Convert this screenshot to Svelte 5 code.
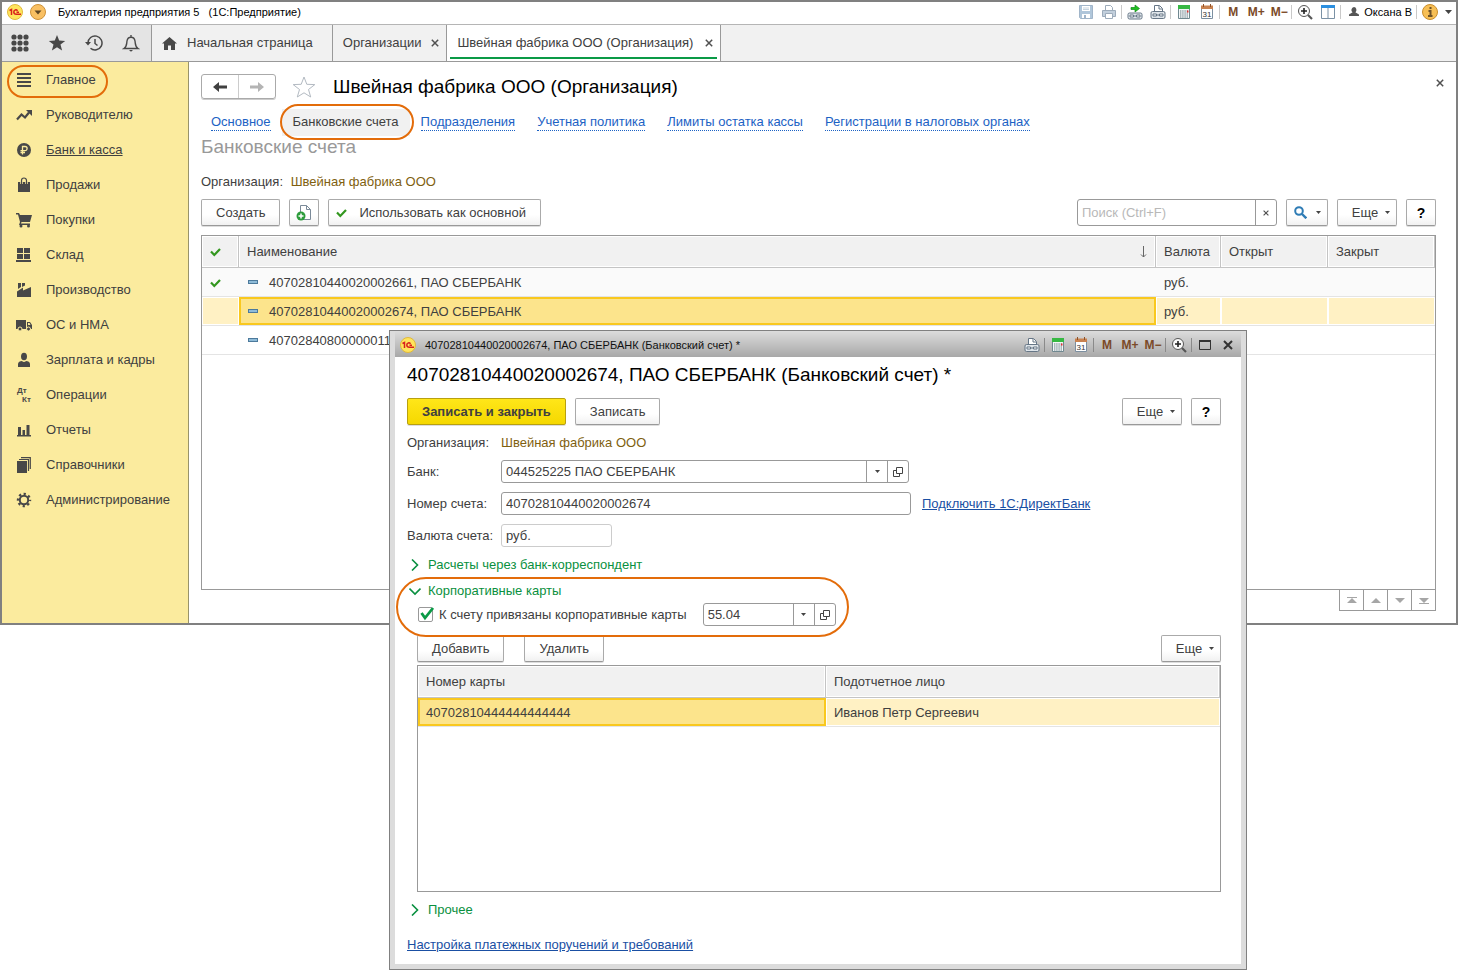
<script lang="ts">
  const menu = [
    { icon: 'main', label: 'Главное', marked: true },
    { icon: 'trend', label: 'Руководителю' },
    { icon: 'ruble', label: 'Банк и касса', current: true },
    { icon: 'bag', label: 'Продажи' },
    { icon: 'cart', label: 'Покупки' },
    { icon: 'stock', label: 'Склад' },
    { icon: 'factory', label: 'Производство' },
    { icon: 'truck', label: 'ОС и НМА' },
    { icon: 'person', label: 'Зарплата и кадры' },
    { icon: 'dtkt', label: 'Операции' },
    { icon: 'chart', label: 'Отчеты' },
    { icon: 'books', label: 'Справочники' },
    { icon: 'gear', label: 'Администрирование' }
  ];

  const links = [
    'Основное',
    'Банковские счета',
    'Подразделения',
    'Учетная политика',
    'Лимиты остатка кассы',
    'Регистрации в налоговых органах'
  ];

  const accounts = [
    { name: '40702810440020002661, ПАО СБЕРБАНК', currency: 'руб.', main: true },
    { name: '40702810440020002674, ПАО СБЕРБАНК', currency: 'руб.', selected: true },
    { name: '40702840800000011', currency: '' }
  ];

  let bank = $state('044525225 ПАО СБЕРБАНК');
  let accountNumber = $state('40702810440020002674');
  let ledger = $state('55.04');
  let hasCards = $state(true);
  let search = $state('');
</script>

{#snippet logo()}
  <svg width="16" height="16" viewBox="0 0 16 16" aria-hidden="true">
    <circle cx="8" cy="8" r="7.5" fill="#ffe45c" stroke="#e0b93c" />
    <path d="M2.500 6.500l2-1v5.500M10.500 6.800C9.500 5.200 6.800 5.600 6.800 8c0 1.800 1.300 2.300 2.700 2.300h4.500M9.500 8.300H12" fill="none" stroke="#d8201c" stroke-width="1.500" />
  </svg>
{/snippet}

{#snippet tool(name: string)}
  <svg width="16" height="16" viewBox="0 0 16 16" aria-hidden="true">
    {#if name === 'save'}
      <path d="M1.500 1.500h13v13h-12l-1-1z" fill="#9db8d2" stroke="#8aa3bc" />
      <path d="M4 2h8v5H4zM4 10h8v4H4z" fill="#fff" />
      <path d="M5 4h6M5 5.500h6" stroke="#b9c9d8" />
      <path d="M6 11h2v3H6z" fill="#8aa3bc" />
    {:else if name === 'print'}
      <path d="M4.500 6V1.500h5l2 2V6" fill="#fff" stroke="#8497aa" />
      <path d="M1.500 6.500h13v6h-13z" fill="#b4c4d4" stroke="#8497aa" />
      <path d="M4.500 9.500h7v5h-7z" fill="#fff" stroke="#8497aa" />
    {:else if name === 'link'}
      <path d="M4 3.500h4V1l4.500 3.500L8 8V5.500H4z" fill="#20c020" stroke="#108a18" stroke-width=".7" />
      <rect x="1" y="9" width="14" height="6" rx="1.500" fill="#dfe5ea" stroke="#667686" />
      <path d="M3 11h3.500v2H3zM9.500 11H13v2H9.500zM6 12h4" fill="#fff" stroke="#667686" />
    {:else if name === 'printlink'}
      <path d="M4.500 8V1.500h5l3 3V8" fill="#fff" stroke="#667686" />
      <path d="M9 2v3h3" fill="none" stroke="#667686" />
      <rect x="1" y="7.500" width="14" height="7" rx="1.500" fill="#dfe5ea" stroke="#667686" />
      <path d="M3 10h3.500v2H3zM9.500 10H13v2H9.500zM6 11h4" fill="#fff" stroke="#667686" />
    {:else if name === 'calc'}
      <path d="M2.500 1.500h11v13h-11z" fill="#f4f7f8" stroke="#708890" />
      <path d="M2 1h12v4H2z" fill="#37b843" />
      <path d="M4 7h8M4 9h8M4 11h8M4 13h8" stroke="#607880" stroke-dasharray="1.400 .8" />
      <path d="M11 6.500h1.500v2H11z" fill="#e03030" />
    {:else if name === 'calendar'}
      <path d="M2.500 3.500h11v11h-11z" fill="#fff" stroke="#7c8fa0" />
      <path d="M2 1.500h12V5H2z" fill="#c98250" />
      <path d="M4.500 0v3M11.500 0v3" stroke="#8f5228" />
      <text x="8" y="13" font-size="8" text-anchor="middle" fill="#333">31</text>
    {:else if name === 'zoom'}
      <circle cx="7" cy="7" r="5.500" fill="#fafafa" stroke="#555" />
      <path d="M4 7h6M7 4v6" stroke="#222" stroke-width="1.600" />
      <path d="M11 11l4 4" stroke="#555" stroke-width="2.200" />
    {:else if name === 'panels'}
      <path d="M1.500 1.500h13v13h-13z" fill="#fff" stroke="#7a91a5" />
      <path d="M1 1h14v3H1z" fill="#2b8fe0" />
      <path d="M8 4v11" stroke="#7a91a5" />
    {:else if name === 'user'}
      <path d="M8 3a2.600 3 0 0 1 1.500 5.300c0 1 3.500 1 3.500 3V12H3v-.7c0-2 3.500-2 3.500-3A3 3 0 0 1 8 3z" fill="#555" />
    {:else if name === 'info'}
      <circle cx="8" cy="8" r="7.500" fill="#f7bf55" stroke="#c98d2c" />
      <path d="M8.500 3v2M6.500 7h2v5M6 12h4.500" fill="none" stroke="#6f5228" stroke-width="2" />
    {:else if name === 'max'}
      <path d="M2.500 3.500h11v9h-11z" fill="none" stroke="#333" />
      <path d="M2 4h12" stroke="#333" stroke-width="2" />
    {:else if name === 'close'}
      <path d="M4 4l8 8M12 4l-8 8" stroke="#333" stroke-width="2" />
    {/if}
  </svg>
{/snippet}

{#snippet glyph(name: string)}
  <svg width="16" height="16" viewBox="0 0 16 16" fill="#484848" aria-hidden="true">
    {#if name === 'main'}
      <path d="M1 1h14v2H1zM1 5h14v2H1zM1 9h14v2H1zM1 13h14v2H1z" />
    {:else if name === 'trend'}
      <path d="M1 12.500l4.500-5 3.500 3L13 5.500" fill="none" stroke="#484848" stroke-width="2.200" />
      <path d="M10 3h6v6z" />
    {:else if name === 'ruble'}
      <circle cx="8" cy="8" r="7" />
      <path d="M6.500 12.500v-8H9a2 2 0 0 1 0 4.200H4.500M4.500 10.500H9" fill="none" stroke="#fbeb9e" stroke-width="1.300" />
    {:else if name === 'bag'}
      <path d="M2 5h12v10H2z" />
      <path d="M5.500 7V3.500a2.500 2.500 0 0 1 5 0V7" fill="none" stroke="#fbeb9e" stroke-width="2.600" />
      <path d="M5.500 7V3.500a2.500 2.500 0 0 1 5 0V7" fill="none" stroke="#484848" stroke-width="1.200" />
    {:else if name === 'cart'}
      <path d="M0 1h3l1 2h12l-2 7H5.500l-.5 1.500h9V13H3l1-3L2 2.500H0z" />
      <circle cx="5" cy="14" r="1.500" />
      <circle cx="12.500" cy="14" r="1.500" />
    {:else if name === 'stock'}
      <path d="M1 1h6v5H1zM8 1h6v5H8zM1 7h6v5H1zM8 7h6v5H8zM0 13h15v2H0z" />
    {:else if name === 'factory'}
      <path d="M1 15V9.500l6-4v3L15 5v10zM2 1h3v4L2 7zM6 1h3v2.500L6 5z" />
    {:else if name === 'truck'}
      <path d="M0 3h10v9H0zM11 5h3l2 3v4h-5z" />
      <path d="M12 6h1.500l1 2H12z" fill="#fbeb9e" />
      <circle cx="4" cy="12" r="2" stroke="#fbeb9e" />
      <circle cx="12.500" cy="12" r="2" stroke="#fbeb9e" />
    {:else if name === 'person'}
      <ellipse cx="8" cy="4.500" rx="3" ry="3.800" />
      <path d="M2 15v-3c0-2 2-3 4-3 1 1.300 3 1.300 4 0 2 0 4 1 4 3v3z" />
    {:else if name === 'dtkt'}
      <text x="1" y="6" font-size="8" font-weight="bold">Дт</text>
      <text x="6" y="15" font-size="8" font-weight="bold">Кт</text>
    {:else if name === 'chart'}
      <path d="M1 13h14v1.500H1zM2 5h3v8H2zM6.500 8h2.500v5H6.500zM10.500 3h3v10h-3z" />
    {:else if name === 'books'}
      <path d="M1 4h10v12H1z" />
      <path d="M3 2.500h9.500V14M5 .7h9.300V12" fill="none" stroke="#484848" stroke-width="1.200" />
    {:else if name === 'gear'}
      <circle cx="8" cy="8" r="4.200" fill="none" stroke="#484848" stroke-width="2" />
      <circle cx="8" cy="8" r="6" fill="none" stroke="#484848" stroke-width="2.400" stroke-dasharray="2.200 2.512" stroke-dashoffset="1.100" />
    {/if}
  </svg>
{/snippet}

{#snippet tick()}
  <svg width="12" height="12" viewBox="0 0 12 12" aria-hidden="true">
    <path d="M1 5.500l3.300 3.500L10 3" fill="none" stroke="#33971f" stroke-width="2.200" />
  </svg>
{/snippet}

{#snippet cross(size: number)}
  <svg width={size} height={size} viewBox="0 0 8 8" aria-hidden="true">
    <path d="M.8.8l6.400 6.400M7.200.8L.8 7.200" stroke="#505050" stroke-width="1.500" />
  </svg>
{/snippet}

{#snippet caret()}
  <svg width="5" height="3" viewBox="0 0 5 3" aria-hidden="true"><path d="M0 0h5L2.500 3z" fill="#444" /></svg>
{/snippet}

{#snippet opener()}
  <svg width="10" height="10" viewBox="0 0 10 10" fill="none" stroke="#444" aria-hidden="true">
    <path d="M3.500.5h6v6h-6zM3 3.500H.5v6h6V7" />
  </svg>
{/snippet}

<div class="desktop">
  <div class="app">
    <header class="titlebar">
      {@render logo()}
      <button class="round" aria-label="Главное меню">
        <svg width="16" height="16" viewBox="0 0 16 16">
          <circle cx="8" cy="8" r="7.500" fill="#f9c063" stroke="#cf9238" />
          <path d="M4.500 6.500h7L8 10.500z" fill="#5d4523" />
        </svg>
      </button>
      <span class="app-name">Бухгалтерия предприятия 5 &nbsp; (1С:Предприятие)</span>
      <div class="tools">
        <button aria-label="Сохранить" class="dim">{@render tool('save')}</button>
        <button aria-label="Печать" class="dim">{@render tool('print')}</button>
        <i></i>
        <button aria-label="Получить ссылку">{@render tool('link')}</button>
        <button aria-label="Перейти по ссылке">{@render tool('printlink')}</button>
        <i></i>
        <button aria-label="Калькулятор">{@render tool('calc')}</button>
        <button aria-label="Календарь">{@render tool('calendar')}</button>
        <i></i>
        <button class="mem">M</button>
        <button class="mem">M+</button>
        <button class="mem">M−</button>
        <i></i>
        <button aria-label="Масштаб">{@render tool('zoom')}</button>
        <button aria-label="Панели">{@render tool('panels')}</button>
        <i></i>
        <button class="user">{@render tool('user')}Оксана В</button>
        <i></i>
        <button aria-label="Справка">{@render tool('info')}</button>
        <button aria-label="Еще"><svg width="7" height="4" viewBox="0 0 7 4"><path d="M0 0h7L3.500 4z" fill="#444" /></svg></button>
      </div>
    </header>

    <nav class="tabs">
      <div class="quick">
        <button aria-label="Разделы">
          <svg width="18" height="18" viewBox="0 0 18 18" fill="#484848">
            {#each [3, 9, 15] as y}
              {#each [3, 9, 15] as x}
                <circle cx={x} cy={y} r="2.600" />
              {/each}
            {/each}
          </svg>
        </button>
        <button aria-label="Избранное">
          <svg width="18" height="18" viewBox="0 0 18 18"><path d="M9 1l2.200 5.600 6 .3-4.700 3.700 1.600 5.900L9 13.200l-5.100 3.300 1.600-5.900L.8 6.900l6-.3z" fill="#484848" /></svg>
        </button>
        <button aria-label="История">
          <svg width="18" height="18" viewBox="0 0 18 18" fill="none" stroke="#484848" stroke-width="1.500">
            <path d="M3 9a7 7 0 1 1 2.500 5.300M10 5v4.500l2.500 2" />
            <path d="M0 8h6L3 11.500z" fill="#484848" stroke="none" />
          </svg>
        </button>
        <button aria-label="Оповещения">
          <svg width="18" height="18" viewBox="0 0 18 18" fill="none" stroke="#484848" stroke-width="1.400">
            <path d="M2 14.500c3-2 2.500-4.500 3-7.500.4-2.500 2-3.800 4-3.800s3.600 1.300 4 3.800c.5 3 0 5.500 3 7.500zM9 1v2" />
            <path d="M7 16h4l-2 1.800z" fill="#484848" stroke="none" />
          </svg>
        </button>
      </div>
      <a class="tab home" href="#home">
        <svg width="15" height="13" viewBox="0 0 15 13"><path d="M7.500 0L15 6.500h-2V13H9V8.500H6V13H2V6.500H0z" fill="#484848" /></svg>
        Начальная страница
      </a>
      <a class="tab" href="#orgs">Организации {@render cross(8)}</a>
      <a class="tab active" href="#org">Швейная фабрика ООО (Организация) {@render cross(8)}</a>
    </nav>

    <div class="body">
      <nav class="sidebar">
        {#each menu as item}
          <a href="#{item.icon}" class:current={item.current} class:marked={item.marked}>
            {@render glyph(item.icon)}
            <span>{item.label}</span>
          </a>
        {/each}
      </nav>

      <main>
        <div class="heading">
          <div class="history">
            <button aria-label="Назад">
              <svg width="16" height="12" viewBox="0 0 16 12"><path d="M1 6l6-5v3.500h8v3H7V11z" fill="#404040" /></svg>
            </button>
            <button aria-label="Вперед">
              <svg width="16" height="12" viewBox="0 0 16 12"><path d="M15 6L9 1v3.500H1v3h8V11z" fill="#b4b4b4" /></svg>
            </button>
          </div>
          <svg class="fav" width="24" height="22" viewBox="0 0 24 22"><path d="M12 1l2.800 7.300 8 .3-6.300 4.900 2.200 7.500L12 16.800 5.300 21l2.200-7.500L1.200 8.600l8-.3z" fill="#fff" stroke="#b3bac2" /></svg>
          <h1>Швейная фабрика ООО (Организация)</h1>
          <button class="page-close" aria-label="Закрыть">{@render cross(8)}</button>
        </div>

        <nav class="links">
          {#each links as link, i}
            <a href="#link{i}" class:here={i === 1}><span>{link}</span></a>
          {/each}
        </nav>

        <h2>Банковские счета</h2>
        <p class="owner">Организация: <span>Швейная фабрика ООО</span></p>

        <div class="commands">
          <button class="btn">Создать</button>
          <button class="btn square" aria-label="Создать копированием">
            <svg width="16" height="16" viewBox="0 0 16 16">
              <path d="M4.500.5h6l4 4v10h-10z" fill="#fff" stroke="#7b8a99" />
              <path d="M10.500.5v4h4" fill="none" stroke="#7b8a99" />
              <circle cx="5" cy="11" r="4.500" fill="#2c9c3b" />
              <path d="M2.500 11h5M5 8.500v5" stroke="#fff" stroke-width="1.500" />
            </svg>
          </button>
          <button class="btn default">{@render tick()} Использовать как основной</button>
          <div class="search">
            <input type="text" placeholder="Поиск (Ctrl+F)" aria-label="Поиск" bind:value={search} />
            <button aria-label="Очистить" onclick={() => (search = '')}>{@render cross(6)}</button>
          </div>
          <button class="btn find" aria-label="Найти">
            <svg width="13" height="13" viewBox="0 0 13 13" fill="none" stroke="#2f7cb5" stroke-width="2">
              <circle cx="5" cy="5" r="3.800" /><path d="M8 8l4.300 4.300" stroke-width="2.400" />
            </svg>
            {@render caret()}
          </button>
          <button class="btn more-btn">Еще {@render caret()}</button>
          <button class="btn square help">?</button>
        </div>

        <div class="grid accounts">
          <table>
            <thead>
              <tr>
                <th class="c-tick" aria-label="Основной">{@render tick()}</th>
                <th>
                  <div class="sorted">
                    Наименование
                    <svg width="7" height="12" viewBox="0 0 7 12" fill="none" stroke="#666"><path d="M3.500 0v11M1 8.500l2.500 2.500L6 8.500" /></svg>
                  </div>
                </th>
                <th class="c-cur">Валюта</th>
                <th class="c-date">Открыт</th>
                <th class="c-date">Закрыт</th>
              </tr>
            </thead>
            <tbody>
              {#each accounts as row}
                <tr class:selected={row.selected}>
                  <td class="c-tick">{#if row.main}{@render tick()}{/if}</td>
                  <td class:cell={row.selected}><span class="dash"></span>{row.name}</td>
                  <td>{row.currency}</td>
                  <td></td>
                  <td></td>
                </tr>
              {/each}
            </tbody>
          </table>
        </div>
        <div class="pager">
          <button aria-label="В начало"><svg width="10" height="7" viewBox="0 0 10 7"><path d="M0 0h10v1H0zM5 1l5 5H0z" fill="#a6a6a6" /></svg></button>
          <button aria-label="Вверх"><svg width="10" height="7" viewBox="0 0 10 7"><path d="M5 1l5 5H0z" fill="#a6a6a6" /></svg></button>
          <button aria-label="Вниз"><svg width="10" height="7" viewBox="0 0 10 7"><path d="M5 6L0 1h10z" fill="#a6a6a6" /></svg></button>
          <button aria-label="В конец"><svg width="10" height="7" viewBox="0 0 10 7"><path d="M0 6h10v1H0zM5 6L0 1h10z" fill="#a6a6a6" /></svg></button>
        </div>
      </main>
    </div>
  </div>

  <div class="dialog" role="dialog" aria-labelledby="dialog-title">
    <header class="dialog-bar">
      {@render logo()}
      <span>40702810440020002674, ПАО СБЕРБАНК (Банковский счет) *</span>
      <div class="tools">
        <button aria-label="Перейти по ссылке">{@render tool('printlink')}</button>
        <i></i>
        <button aria-label="Калькулятор">{@render tool('calc')}</button>
        <button aria-label="Календарь">{@render tool('calendar')}</button>
        <i></i>
        <button class="mem">M</button>
        <button class="mem">M+</button>
        <button class="mem">M−</button>
        <i></i>
        <button aria-label="Масштаб">{@render tool('zoom')}</button>
        <i></i>
        <button aria-label="Развернуть">{@render tool('max')}</button>
        <button aria-label="Закрыть">{@render tool('close')}</button>
      </div>
    </header>

    <div class="form">
      <h1 id="dialog-title">40702810440020002674, ПАО СБЕРБАНК (Банковский счет) *</h1>
      <div class="commands">
        <button class="btn primary">Записать и закрыть</button>
        <button class="btn">Записать</button>
        <button class="btn more-btn push">Еще {@render caret()}</button>
        <button class="btn square help">?</button>
      </div>

      <div class="fields">
        <span>Организация:</span>
        <span class="brown">Швейная фабрика ООО</span>

        <label for="bank">Банк:</label>
        <div class="combo wide">
          <input id="bank" type="text" bind:value={bank} />
          <button aria-label="Выбрать из списка">{@render caret()}</button>
          <button aria-label="Открыть">{@render opener()}</button>
        </div>

        <label for="number">Номер счета:</label>
        <div class="row">
          <div class="combo number"><input id="number" type="text" bind:value={accountNumber} /></div>
          <a class="link" href="#direct">Подключить 1С:ДиректБанк</a>
        </div>

        <label for="currency">Валюта счета:</label>
        <div class="combo readonly"><input id="currency" type="text" value="руб." readonly /></div>
      </div>

      <button class="group">
        <svg width="12" height="12" viewBox="0 0 12 12"><path d="M3 .5L8.500 6 3 11.500" /></svg>
        Расчеты через банк-корреспондент
      </button>

      <div class="cards">
        <button class="group">
          <svg width="12" height="12" viewBox="0 0 12 12"><path d="M.500 3.500L6 9l5.500-5.500" /></svg>
          Корпоративные карты
        </button>
        <div class="row card-row">
          <label class="check">
            <input type="checkbox" bind:checked={hasCards} />
            <span class="box">
              {#if hasCards}
                <svg width="15" height="13" viewBox="0 0 15 13"><path d="M2.500 5l3.500 5L14 0" fill="none" stroke="#0a9a46" stroke-width="2.800" /></svg>
              {/if}
            </span>
            К счету привязаны корпоративные карты
          </label>
          <div class="combo ledger">
            <input type="text" aria-label="Счет учета" bind:value={ledger} />
            <button aria-label="Выбрать из списка">{@render caret()}</button>
            <button aria-label="Открыть">{@render opener()}</button>
          </div>
        </div>
      </div>

      <div class="nested">
        <div class="commands">
          <button class="btn">Добавить</button>
          <button class="btn delete">Удалить</button>
          <button class="btn more-btn push">Еще {@render caret()}</button>
        </div>
        <div class="grid card-list">
          <table>
            <thead>
              <tr><th class="c-card">Номер карты</th><th>Подотчетное лицо</th></tr>
            </thead>
            <tbody>
              <tr class="selected"><td class="cell">40702810444444444444</td><td>Иванов Петр Сергеевич</td></tr>
            </tbody>
          </table>
        </div>
      </div>

      <button class="group other">
        <svg width="12" height="12" viewBox="0 0 12 12"><path d="M3 .5L8.500 6 3 11.500" /></svg>
        Прочее
      </button>
      <a class="link" href="#settings">Настройка платежных поручений и требований</a>
    </div>
  </div>
</div>

<style>
  :global(body) {
    background: #fff;
    color: #404040;
    font: 13px/16px 'Liberation Sans', Arial, sans-serif;
  }
  button,
  input {
    font: inherit;
    color: inherit;
    margin: 0;
    padding: 0;
    border: 0;
    background: none;
    box-sizing: border-box;
  }
  svg {
    display: block;
    flex: none;
  }
  h1,
  h2,
  p {
    margin: 0;
    font-weight: normal;
  }
  h1 {
    font-size: 19px;
    line-height: 24px;
    color: #000;
    white-space: nowrap;
  }

  /* both windows share one cell, the dialog lies over the main window */
  .desktop {
    display: grid;
    align-items: start;
    min-height: 100vh;
  }
  .app,
  .dialog {
    grid-area: 1 / 1;
  }

  .app {
    border: 2px solid #808080;
  }
  .titlebar {
    display: flex;
    align-items: center;
    height: 23px;
    padding: 0 4px 3px 5px;
    box-sizing: border-box;
    border-bottom: 1px solid #b5b5b5;
    font-size: 11px;
    color: #000;
  }
  .round {
    margin: 0 12px 0 7px;
  }
  .tools {
    display: flex;
    align-items: center;
    gap: 7px;
    margin-left: auto;
  }
  .tools i {
    width: 1px;
    height: 14px;
    margin: 0 -2px 0 -3px;
    background: #c9c9c9;
  }
  .dim {
    opacity: 0.8;
  }
  .mem {
    display: flex;
    justify-content: center;
    width: 16px;
    font-weight: bold;
    font-size: 12px;
    color: #7b4a28;
  }
  .user {
    display: flex;
    align-items: center;
    gap: 2px;
  }

  .tabs {
    display: flex;
    height: 37px;
    background: #f1f1f1;
    border-bottom: 1px solid #999;
    box-sizing: border-box;
  }
  .quick {
    display: flex;
    align-items: center;
    gap: 19px;
    width: 150px;
    padding-left: 9px;
    box-sizing: border-box;
    background: #e4e4e4;
    border-right: 1px solid #999;
  }
  .tab {
    display: flex;
    align-items: center;
    padding: 0 7px 0 10px;
    gap: 10px;
    color: #404040;
    text-decoration: none;
    border-right: 1px solid #999;
  }
  .home {
    padding-right: 19px;
  }
  .active {
    gap: 12px;
    background: #fff;
    box-shadow: inset 0 -2px #fff, inset 3px 0 #fff, inset -3px 0 #fff, inset 0 -4px #0a9a46;
  }

  .body {
    display: flex;
  }
  .sidebar {
    flex: none;
    width: 187px;
    box-sizing: border-box;
    background: #fbeb9e;
    border-right: 1px solid #99936a;
  }
  .sidebar a {
    display: flex;
    align-items: center;
    gap: 14px;
    height: 35px;
    padding-left: 14px;
    color: #404040;
    text-decoration: none;
    position: relative;
  }
  .sidebar .current span {
    text-decoration: underline;
  }
  .marked::after,
  .here::after,
  .cards::after {
    content: '';
    position: absolute;
    border: 2px solid #e36c0a;
    border-radius: 30px;
    pointer-events: none;
  }
  .marked::after {
    inset: 3px 80px -1px 5px;
  }

  main {
    flex: 1;
    min-width: 0;
    padding: 12px 20px 12px 12px;
  }
  .heading {
    display: flex;
    align-items: center;
    height: 25px;
  }
  .history {
    display: flex;
    border: 1px solid #aaa;
    border-radius: 3px;
    box-shadow: 0 1px #ccc;
  }
  .history button {
    width: 36px;
    height: 23px;
    display: grid;
    place-items: center;
  }
  .history button + button {
    width: 37px;
    border-left: 1px solid #ccc;
  }
  .fav {
    margin: 0 17px 0 16px;
  }
  .page-close {
    margin: 0 -8px 8px auto;
  }

  .links {
    display: flex;
    margin: 10px 0 0 -1px;
  }
  .links a {
    position: relative;
    padding: 5px 11px;
    color: #1c62c4;
    text-decoration: none;
    white-space: nowrap;
  }
  .links a span {
    display: block;
    border-bottom: 1px dotted #1c62c4;
  }
  .links .here {
    color: #404040;
    background: #f1f1f1;
  }
  .links .here span {
    border-color: transparent;
  }
  .here::after {
    inset: -5px -4px -4px -2px;
  }
  h2 {
    font-size: 19px;
    line-height: 22px;
    color: #999;
  }
  .owner {
    margin: 16px 0 9px;
  }
  .owner span {
    margin-left: 4px;
    color: #7f5f10;
  }
  .brown {
    color: #7f5f10;
  }

  .commands {
    display: flex;
    align-items: center;
    gap: 9px;
  }
  .btn {
    display: flex;
    align-items: center;
    justify-content: center;
    height: 27px;
    padding: 0 14px;
    border: 1px solid #aaa;
    border-bottom-color: #999;
    border-radius: 2px;
    background: linear-gradient(#fff 60%, #f1f1f1);
    box-shadow: 0 1px #ddd;
    white-space: nowrap;
  }
  .square {
    width: 30px;
    padding: 0;
  }
  .default {
    gap: 11px;
    padding-left: 7px;
  }
  .help {
    color: #000;
    font-size: 14px;
    font-weight: bold;
  }
  .find {
    gap: 9px;
    width: 42px;
    padding: 0;
  }
  .more-btn {
    gap: 7px;
    width: 60px;
    padding: 0 0 0 8px;
  }
  .primary {
    font-weight: bold;
    background: linear-gradient(#ffe619, #f5d800);
    border-color: #b8a010;
  }
  .push {
    margin-left: auto;
  }
  .search,
  .combo {
    display: flex;
    box-sizing: border-box;
    border: 1px solid #999;
    border-radius: 3px;
    background: #fff;
  }
  .search {
    width: 200px;
    height: 27px;
    margin-left: auto;
  }
  .search input,
  .combo input {
    flex: 1;
    min-width: 0;
    padding: 0 4px;
  }
  .search input::placeholder {
    color: #b8b8b8;
    opacity: 1;
  }
  .search button,
  .combo button {
    width: 21px;
    display: grid;
    place-items: center;
    border-left: 1px solid #999;
  }

  .grid {
    border: 1px solid #999;
    background: #fff;
  }
  .accounts {
    margin-top: 9px;
    min-height: 353px;
  }
  table {
    width: 100%;
    border-collapse: separate;
    border-spacing: 0;
    table-layout: fixed;
  }
  th,
  td {
    box-sizing: border-box;
    padding: 0 8px;
    text-align: left;
    font-weight: normal;
    white-space: nowrap;
  }
  th {
    height: 32px;
    background: #f1f1f1;
    border-right: 1px solid #c4c4c4;
    border-bottom: 1px solid #c4c4c4;
    box-shadow: inset 0 0 0 1px #fff;
  }
  td {
    height: 29px;
    padding-top: 2px;
    background: #fafafa;
    border-bottom: 1px solid #e4e4e4;
  }
  tr:nth-child(3) td {
    background: #fff;
  }
  .selected td {
    background: #fff1c4;
    box-shadow: inset 0 0 0 1px #fff;
  }
  .selected .cell {
    background: #fce48c;
    box-shadow: inset 0 0 0 2px #f9c81e;
  }
  .c-tick {
    width: 37px;
    padding-right: 0;
  }
  .c-cur {
    width: 65px;
  }
  .c-date {
    width: 107px;
  }
  .sorted {
    display: flex;
    align-items: center;
    justify-content: space-between;
  }
  .dash {
    display: inline-block;
    width: 8px;
    height: 2px;
    margin: 0 11px 3px 1px;
    border: 1px solid #4c7a9c;
    background: #8ebbd8;
  }
  .pager {
    display: flex;
    justify-content: flex-end;
  }
  .pager button {
    width: 24px;
    height: 21px;
    display: grid;
    place-items: center;
    border: solid #999;
    border-width: 0 1px 1px 0;
  }
  .pager button:first-child {
    width: 25px;
    border-left-width: 1px;
  }

  .dialog {
    z-index: 1;
    margin: 330px 211px 0 389px;
    padding: 0 5px 5px;
    border: 1px solid #808080;
    background: #dcdcdc;
  }
  .dialog-bar {
    display: flex;
    align-items: center;
    gap: 9px;
    height: 26px;
    padding: 2px 5px 0;
    box-sizing: border-box;
    background: linear-gradient(#dcdcdc, #a8a8a8);
    font-size: 11px;
    color: #111;
  }
  .dialog-bar .tools i {
    background: #8a8a8a;
  }
  .form {
    padding: 6px 20px 11px 12px;
    background: #fff;
  }
  .form > .commands {
    margin-top: 11px;
  }
  .fields {
    display: grid;
    grid-template-columns: 85px 1fr;
    gap: 9px;
    align-items: center;
    margin-top: 10px;
  }
  .fields label {
    white-space: nowrap;
  }
  .combo {
    height: 23px;
  }
  .wide {
    width: 408px;
  }
  .number {
    width: 410px;
  }
  .readonly {
    width: 111px;
    border-color: #ccc;
  }
  .row {
    display: flex;
    align-items: center;
    gap: 11px;
  }
  .link {
    color: #1a4fa3;
  }
  .group {
    display: flex;
    align-items: center;
    gap: 7px;
    margin: 10px 0 0 2px;
    color: #0a9040;
  }
  .group path {
    fill: none;
    stroke: #0a9040;
    stroke-width: 1.6;
  }
  .cards {
    position: relative;
  }
  .cards::after {
    left: -11px;
    top: -6px;
    width: 449px;
    height: 56px;
    z-index: 1;
  }
  .card-row {
    gap: 16px;
    margin: 4px 0 0 11px;
  }
  .check {
    display: flex;
    align-items: center;
    gap: 6px;
    position: relative;
  }
  .check input {
    position: absolute;
    width: 15px;
    height: 15px;
    opacity: 0;
  }
  .box {
    width: 13px;
    height: 13px;
    border: 1px solid #999;
    border-radius: 2px;
  }
  .box svg {
    overflow: visible;
  }
  .ledger {
    width: 133px;
  }
  .nested {
    margin: 9px 0 0 10px;
  }
  .delete {
    margin-left: 11px;
  }
  .card-list {
    margin-top: 3px;
    min-height: 225px;
  }
  .c-card {
    width: 408px;
  }
  .other {
    margin: 10px 0 19px 2px;
  }
</style>
